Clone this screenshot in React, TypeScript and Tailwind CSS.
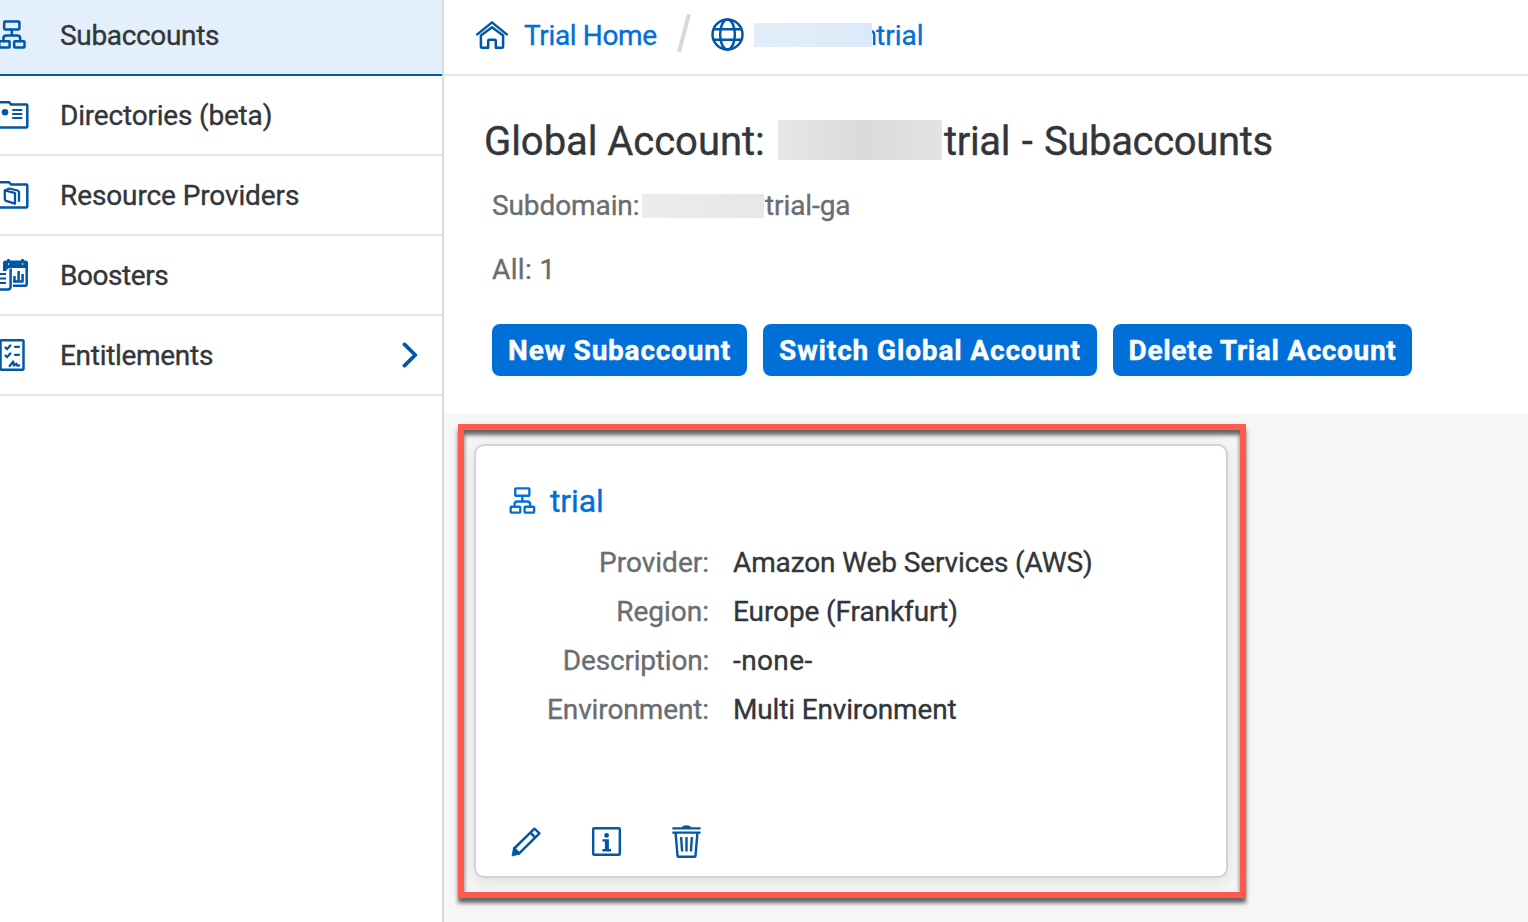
import type { ReactNode } from "react";

type IconProps = { className?: string };

function SubaccountIcon({ className }: IconProps) {
  return (
    <svg className={className} viewBox="0 0 28 29" fill="none" stroke="currentColor" strokeWidth="2.5" strokeLinejoin="round" strokeLinecap="round">
      <rect x="6.2" y="1.4" width="15.2" height="8" rx="0.8" />
      <rect x="1.3" y="21.2" width="10.3" height="6.3" rx="0.8" />
      <rect x="16.2" y="21.2" width="10.3" height="6.3" rx="0.8" />
      <path d="M13.8 10v5.6M5.4 21v-2.4q0-3 3-3h10.8q3 0 3 3V21" />
    </svg>
  );
}

function FolderShape() {
  return <path d="M-3 26.6V1.2H9l2 2.3h15.3a1 1 0 0 1 1 1v21.1a1 1 0 0 1-1 1z" />;
}

function DirectoryIcon() {
  return (
    <svg className="h-7 w-[29px]" viewBox="0 0 29 28" fill="none" stroke="currentColor" strokeWidth="2.5">
      <FolderShape />
      <circle cx="5" cy="11.3" r="3.3" fill="currentColor" stroke="none" />
      <path d="M13 9h8.5M13 13h8.5M13 17h8.5" strokeWidth="2.1" strokeLinecap="round" />
    </svg>
  );
}

function ProviderIcon() {
  return (
    <svg className="h-7 w-[29px]" viewBox="0 0 29 28" fill="none" stroke="currentColor" strokeWidth="2.5" strokeLinejoin="round">
      <FolderShape />
      <path d="M4.8 9.5l9.7 2.3q.5.2.5.7v10.2l-9-2.9q-1.200-.4-1.200-1.500zM4.800 9.500l4.700-2 8 2q1.500.4 1.500 1.700v9.600" strokeWidth="2.300" />
    </svg>
  );
}

function BoosterIcon() {
  return (
    <svg className="h-8 w-7" viewBox="0 0 28 32" fill="none" stroke="currentColor" strokeWidth="2.5">
      <path d="M3 12V4a2.500 2.500 0 0 1 2.500-2.500h20A2.500 2.500 0 0 1 28 4V9H9l-2.500 2v1z" fill="currentColor" stroke="none" />
      <path d="M8.500 -1v5M22.500 -1v5" strokeWidth="2.600" />
      <path d="M8 5h1.200M22 5h1.200" stroke="white" strokeWidth="1.500" />
      <path d="M26.700 7v18.300a1.400 1.400 0 0 1-1.400 1.400H13" />
      <path d="M13 22.500h10.500M14.500 22.500V17M18.600 22.500V12M22.600 22.500V15" strokeWidth="2.500" />
      <path d="M0 15h6M0 19.500h6M0 24h6" strokeWidth="2.100" />
      <path d="M10.600 9.500v18q0 3-3 3H0" />
    </svg>
  );
}

function EntitlementIcon() {
  return (
    <svg className="h-8 w-[25px]" viewBox="0 0 25 32" fill="none" stroke="currentColor" strokeWidth="2.200" strokeLinecap="round" strokeLinejoin="round">
      <rect x="0.500" y="1.200" width="23" height="29.500" rx="1" strokeWidth="2.500" />
      <path d="M5.500 8.500l1.600 1.600 3.200-3.600M5.500 16.500l1.600 1.600 3.200-3.600M15 7.800h4M15 15.800h4" />
      <path d="M9.600 27l3.600-4.500.6 4 2.600-1.800.8 2 2-.4" />
    </svg>
  );
}

function HomeIcon() {
  return (
    <svg className="h-7 w-8" viewBox="0 0 32 28" fill="none" stroke="currentColor" strokeWidth="2.500" strokeLinejoin="round" strokeLinecap="round">
      <path d="M1.300 13.400L16 1.400l14.700 12" />
      <path d="M4.900 14.600V25.700a1 1 0 0 0 1 1H12.200v-7.100q0-.8.800-.8h6q.8 0 .8.8v7.100h6.300a1 1 0 0 0 1-1V14.600L16 6.300z" />
    </svg>
  );
}

function GlobeIcon() {
  return (
    <svg className="h-[33px] w-[33px]" viewBox="0 0 33 33" fill="none" stroke="currentColor" strokeWidth="2.500">
      <circle cx="16.500" cy="16.500" r="15" />
      <ellipse cx="16.500" cy="16.500" rx="7.400" ry="15" />
      <path d="M3 11.200h27M3 21.800h27" />
    </svg>
  );
}

function PencilIcon() {
  return (
    <svg className="h-[30px] w-[30px]" viewBox="0 0 30 30" fill="none" stroke="currentColor" strokeWidth="2.500" strokeLinejoin="round">
      <path d="M3.200 21.500L23.400 1.700l5 4.600L8 26.600z" />
      <path d="M19.200 5.500l5.200 5.200" />
      <path d="M2.600 20.500L1 29l8-2-5.400-6.500z" fill="currentColor" strokeWidth="0.800" />
    </svg>
  );
}

function InfoIcon() {
  return (
    <svg className="h-[29px] w-[29px]" viewBox="0 0 29 29">
      <rect x="1.200" y="1.200" width="26.600" height="26.600" rx="1" fill="none" stroke="currentColor" strokeWidth="2.400" />
      <circle cx="14.600" cy="8.400" r="2.400" fill="currentColor" />
      <path d="M10.400 12.300h6.500v9.700h2.100v2.500h-8.600V22h2.500v-7.400h-2.500z" fill="currentColor" />
    </svg>
  );
}

function TrashIcon() {
  return (
    <svg className="h-[33px] w-[29px]" viewBox="0 0 29 33" fill="none" stroke="currentColor" strokeWidth="2.400">
      <path d="M9.500 3q.8-2.800 5-2.800T19.500 3z" fill="currentColor" stroke="none" />
      <path d="M.4 3.400h28.200M.4 7.600h28.200" strokeWidth="2.200" />
      <path d="M3.600 8l1.900 22.800a1 1 0 0 0 1 1h16a1 1 0 0 0 1-1l1.900-22.800" />
      <path d="M9.100 12l1 14.500M14.500 12v14.500M19.900 12l-1 14.500" />
    </svg>
  );
}

function NavItem({ icon, label, active, children }: { icon: ReactNode; label: ReactNode; active?: boolean; children?: ReactNode }) {
  return (
    <li
      className={
        active
          ? "flex h-[76px] items-center border-b-2 border-[#0057a8] bg-[#e3effb] pb-1"
          : "flex h-20 items-center border-b-2 border-[#e4e4e4]"
      }
    >
      <span className="flex w-[29px] shrink-0 text-[#0057a8]">{icon}</span>
      <span className="ml-[31px] grow pt-0.5">{label}</span>
      {children}
    </li>
  );
}

function Field({ label, children }: { label: ReactNode; children: ReactNode }) {
  return (
    <div className="flex h-[49px] items-center">
      <dt className="flex w-[233px] justify-end text-[#6a6d70]">{label}</dt>
      <dd className="ml-6">{children}</dd>
    </div>
  );
}

export default function App() {
  return (
    <div className="flex h-[922px] w-[1528px] overflow-hidden bg-white font-[Roboto,sans-serif] text-[28px] leading-8 whitespace-nowrap text-[#32363a] [-webkit-text-stroke:0.35px_currentColor]">
      <nav className="w-[444px] shrink-0 border-r-2 border-[#d9d9d9]">
        <ul>
          <NavItem active icon={<SubaccountIcon className="mb-px -ml-0.5 h-[29px] w-7 shrink-0" />} label={<span className="tracking-[-0.34px]">Subaccounts</span>} />
          <NavItem icon={<DirectoryIcon />} label={<span className="tracking-[-0.19px]">Directories (beta)</span>} />
          <NavItem icon={<ProviderIcon />} label={<span className="tracking-[-0.11px]">Resource Providers</span>} />
          <NavItem icon={<BoosterIcon />} label={<span className="tracking-[-0.45px]">Boosters</span>} />
          <NavItem icon={<EntitlementIcon />} label={<span className="tracking-[-0.3px]">Entitlements</span>}>
            <svg className="mr-6 h-[26px] w-4 text-[#0057a8]" viewBox="0 0 16 26" fill="none" stroke="currentColor" strokeWidth="3.800" strokeLinecap="round" strokeLinejoin="round">
              <path d="M2.500 2.400L13.300 13L2.500 23.600" />
            </svg>
          </NavItem>
        </ul>
      </nav>

      <div className="flex grow flex-col">
        <header className="flex h-[76px] shrink-0 items-center border-b-2 border-[#e4e4e4] pb-1 pl-8 text-[#0057a8]">
          <HomeIcon />
          <a className="ml-4 w-[133px] pt-0.5 tracking-[-0.35px] text-[#0070d8]">Trial Home</a>
          <svg className="-mt-1 ml-5 h-[38px] w-[14px]" viewBox="0 0 14 38" stroke="#d9d9d9" strokeWidth="4">
            <path d="M2 38L12 0" />
          </svg>
          <span className="-mt-px ml-5 flex"><GlobeIcon /></span>
          <span className="ml-2.5 h-6 w-[118px] bg-gradient-to-r from-[#e2eefa] to-[#dbeaf8]" />
          <svg className="mt-1 h-[15px] w-1" viewBox="0 0 4 15" fill="none" stroke="#0070d8" strokeWidth="2.600">
            <path d="M0 1q2.200 1 2.200 4v10" />
          </svg>
          <a className="pt-0.5 text-[#0070d8]">trial</a>
        </header>

        <section className="h-[338px] shrink-0 pl-12">
          <h1 className="mt-10 -ml-2 flex h-12 items-center text-[40px] leading-[48px]">
            <span className="w-[294px] pt-1 tracking-[-0.05px]">Global Account:</span>
            <span className="h-10 w-[164px] bg-gradient-to-r from-[#e6e7e7] via-[#d9dada] to-[#e2e3e3]" />
            <span className="ml-0.5 pt-1 tracking-[-0.35px] [word-spacing:2px]">trial - Subaccounts</span>
          </h1>
          <p className="mt-[26px] flex h-8 items-center text-[#6a6d70]">
            <span className="w-[150px] tracking-[-0.1px]">Subdomain:</span>
            <span className="h-6 w-[122px] bg-gradient-to-r from-[#ebecec] to-[#e6e7e7]" />
            <span className="ml-px tracking-[-0.1px]">trial-ga</span>
          </p>
          <p className="mt-8 tracking-[0.4px] text-[#6a6d70]">All: 1</p>
          <div className="mt-[38px] flex gap-4 font-bold text-white [-webkit-text-stroke:0.4px_currentColor]">
            <button className="h-[52px] w-[255px] rounded-lg bg-[#0070d8] pt-0.5 tracking-[0.78px]">New Subaccount</button>
            <button className="h-[52px] w-[334px] rounded-lg bg-[#0070d8] pt-0.5 tracking-[0.85px]">Switch Global Account</button>
            <button className="h-[52px] w-[299px] rounded-lg bg-[#0070d8] pt-0.5 tracking-[0.65px]">Delete Trial Account</button>
          </div>
        </section>

        <main className="grow bg-[#f6f6f6] pt-2.5 pl-3.5">
          <div className="h-[474px] w-[788px] border-[6px] border-[#ff5a4d] pt-3.5 pl-2.5 shadow-[0_5px_4px_rgba(0,0,0,0.6),inset_0_5px_4px_rgba(0,0,0,0.6)]">
            <article className="flex h-[434px] w-[754px] flex-col rounded-[10px] border-2 border-[#d3d3d3] bg-white shadow-[0_4px_16px_rgba(0,0,0,0.1)]">
              <h2 className="mt-[39px] ml-[33px] flex h-8 items-center text-[32px] text-[#0070d8]">
                <SubaccountIcon className="mb-0.5 h-[27px] w-[27px]" />
                <span className="ml-3.5 tracking-[-0.1px]">trial</span>
              </h2>
              <dl className="mt-[21px]">
                <Field label={<span>Provider:</span>}><span className="tracking-[-0.12px]">Amazon Web Services (AWS)</span></Field>
                <Field label={<span>Region:</span>}><span className="tracking-[-0.1px]">Europe (Frankfurt)</span></Field>
                <Field label={<span className="tracking-[-0.2px]">Description:</span>}><span className="tracking-[0.4px]">-none-</span></Field>
                <Field label={<span className="tracking-[-0.1px]">Environment:</span>}><span className="tracking-[-0.15px]">Multi Environment</span></Field>
              </dl>
              <div className="mt-[89px] ml-[35px] flex h-[37px] items-center text-[#0057a8]">
                <PencilIcon />
                <span className="ml-[51px]"><InfoIcon /></span>
                <span className="ml-[51px]"><TrashIcon /></span>
              </div>
            </article>
          </div>
        </main>
      </div>
    </div>
  );
}
